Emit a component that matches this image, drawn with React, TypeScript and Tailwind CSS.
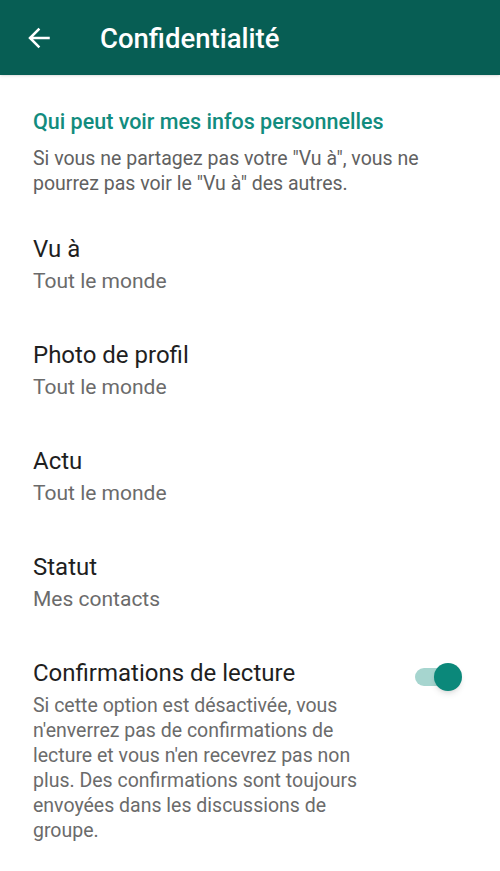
import React from 'react';

const items = [
  { title: 'Vu à', value: 'Tout le monde' },
  { title: 'Photo de profil', value: 'Tout le monde' },
  { title: 'Actu', value: 'Tout le monde' },
  { title: 'Statut', value: 'Mes contacts' },
];

function BackArrow() {
  return (
    <svg width="24" height="24" viewBox="0 0 24 24" fill="none">
      <path d="M21.5 12H3.5M11.5 3.5 3 12l8.5 8.5" stroke="white" strokeWidth="2.5" strokeLinecap="square" />
    </svg>
  );
}

export default function App() {
  return (
    <div className="w-[500px] h-[871px] bg-white overflow-hidden" style={{ fontFamily: 'Roboto, "Noto Sans", sans-serif' }}>
      <header className="h-[75px] bg-[#075e54] flex items-center shadow-sm">
        <div className="w-[100px] pl-[27px] flex items-center">
          <BackArrow />
        </div>
        <h1 className="text-white text-[27.5px] font-medium pt-[2px]">Confidentialité</h1>
      </header>

      <div className="pl-[33px] pr-6">
        <h2 className="mt-[33px] text-[21.5px] leading-[28px] font-medium text-[#128c7e]">
          Qui peut voir mes infos personnelles
        </h2>
        <p className="mt-[10px] text-[19.5px] leading-[25px] text-[#616161]">
          Si vous ne partagez pas votre "Vu à", vous ne pourrez pas voir le "Vu à" des autres.
        </p>

        <div className="mt-[38px] flex flex-col">
          {items.map((item) => (
            <div key={item.title} className="h-[106px]">
              <div className="text-[24px] leading-[30px] text-[#1f1f1f]">{item.title}</div>
              <div className="mt-[2px] text-[21px] leading-[30px] text-[#6b6b6b]">{item.value}</div>
            </div>
          ))}
        </div>

        <div className="flex items-start">
          <div className="flex-1">
            <div className="text-[24px] leading-[30px] text-[#1f1f1f]">Confirmations de lecture</div>
            <p className="mt-[5px] text-[19.5px] leading-[25px] text-[#6b6b6b] max-w-[360px]">
              Si cette option est désactivée, vous n'enverrez pas de confirmations de lecture et vous n'en recevrez pas non plus. Des confirmations sont toujours envoyées dans les discussions de groupe.
            </p>
          </div>
          <div className="relative w-[47px] h-[28px] mr-[14px] mt-[5px]">
            <div className="absolute left-0 top-[5px] w-[40px] h-[18px] rounded-full bg-[#a6d5cf]" />
            <div className="absolute right-0 top-0 w-[28px] h-[28px] rounded-full bg-[#0b887a] shadow-md" />
          </div>
        </div>
      </div>
    </div>
  );
}
